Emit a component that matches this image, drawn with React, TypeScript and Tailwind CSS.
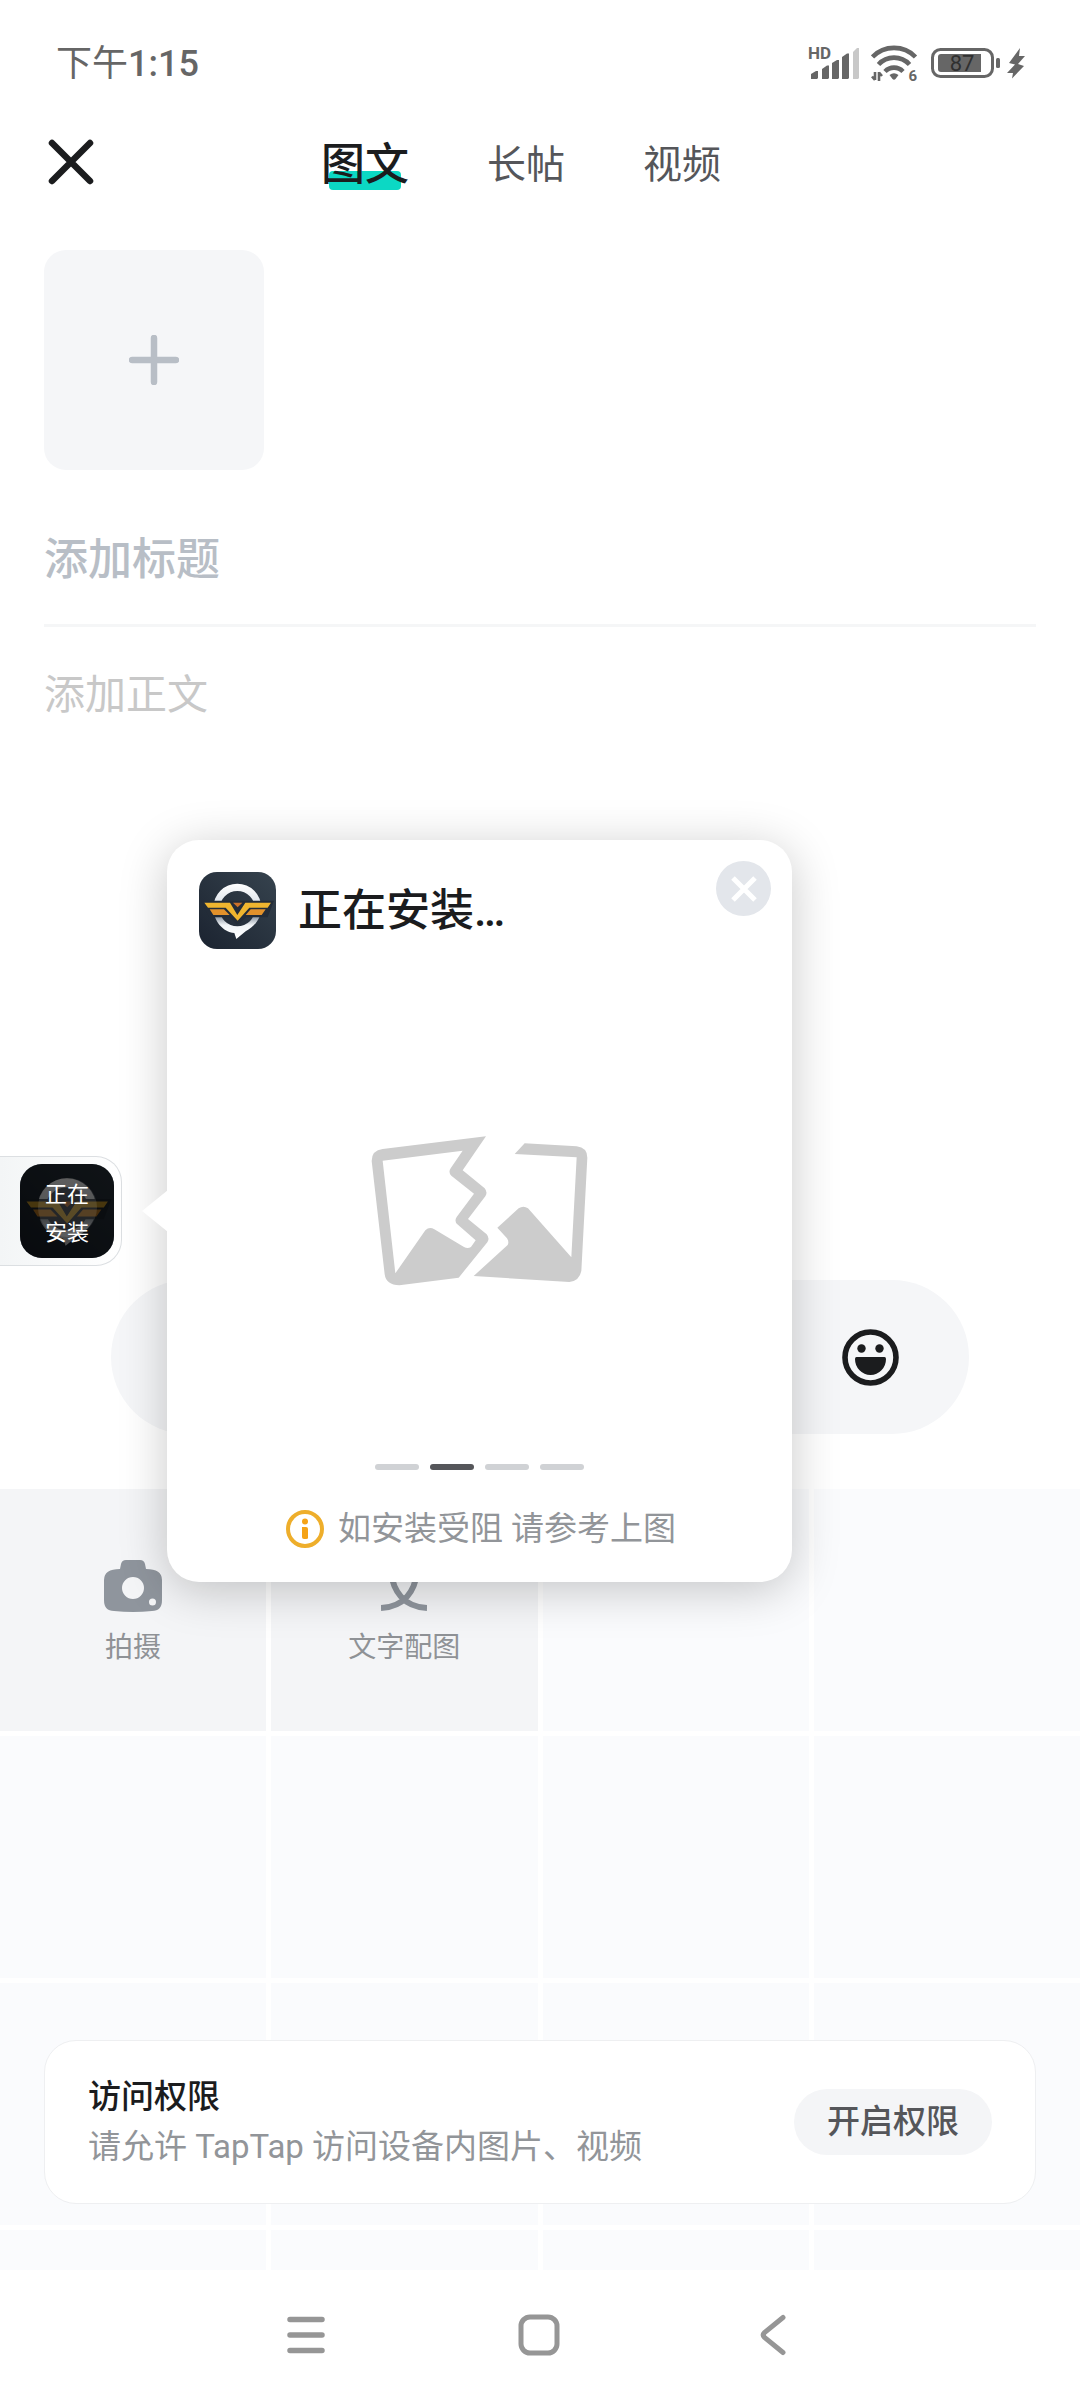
import React, { useState } from 'react';

interface IconProps {
  className?: string;
}

const SignalIcon: React.FC<IconProps> = ({ className }) => (
  <svg viewBox="-2 -6 52 48" className={className} fill="#666666" aria-hidden="true">
    <text x="-1" y="13" fontSize="17" fontWeight="700" fontFamily="Roboto, sans-serif">HD</text>
    <path d="M2 33V28L7 25H9V32L8 33Z" />
    <path d="M13 33V23L18 19.500H20V32L19 33Z" />
    <path d="M23 33V17L28 14H30V32L29 33Z" />
    <path d="M33 33V11L38 7.500H40V32L39 33Z" />
    <path d="M44 33V6L48 2H50V32L49 33Z" fill="#c8c8c8" />
  </svg>
);

const WifiIcon: React.FC<IconProps> = ({ className }) => (
  <svg viewBox="0 -6 48 48" className={className} fill="none" stroke="#666666" aria-hidden="true">
    <path d="M1.500 11A30 30 0 0 1 44.500 11" strokeWidth="4.600" />
    <path d="M7.500 18.500A21 21 0 0 1 38.500 18.500" strokeWidth="4.600" />
    <path d="M14 25.500A12.500 12.500 0 0 1 32 25.500" strokeWidth="4.600" />
    <path d="M18.500 29Q23 25.500 27.500 29L24.500 33Q23 34.500 21.500 33Z" fill="#666666" stroke="none" />
    <path d="M4 26V34M4 34L1 30.500M8 35V26M8 26.500L11 30" strokeWidth="2.600" />
    <text x="37.500" y="35" fontSize="15" fontWeight="700" fontFamily="Roboto, sans-serif" fill="#666666" stroke="none">6</text>
  </svg>
);

const BatteryIcon: React.FC<IconProps> = ({ className }) => (
  <svg viewBox="0 -6 70 48" className={className} aria-hidden="true">
    <rect x="1.500" y="3.500" width="60" height="27" rx="8" fill="none" stroke="#666666" strokeWidth="3" />
    <path d="M10 8H50V26H10Q7 26 7 23V11Q7 8 10 8Z" fill="#666666" />
    <rect x="65" y="12" width="4" height="10" rx="1.500" fill="#666666" />
    <text x="31" y="25" textAnchor="middle" fontSize="22" fontFamily="Roboto, sans-serif" fill="#303030">87</text>
  </svg>
);

const BoltIcon: React.FC<IconProps> = ({ className }) => (
  <svg viewBox="0 -6 18 48" className={className} fill="#666666" aria-hidden="true">
    <path d="M13 2L2 17L8 18.500L0 27H6L5 32.500L17 20L11 18L18 10H12Z" />
  </svg>
);

const CloseIcon: React.FC<IconProps> = ({ className }) => (
  <svg viewBox="0 0 46 46" className={className} fill="none" stroke="#1b1c1e" strokeWidth="6.500" strokeLinecap="round" aria-hidden="true">
    <path d="M4 4L42 42M42 4L4 42" />
  </svg>
);

const PlusIcon: React.FC<IconProps> = ({ className }) => (
  <svg viewBox="0 0 50 50" className={className} fill="none" stroke="#b8bec6" strokeWidth="6.500" strokeLinecap="round" aria-hidden="true">
    <path d="M25 3V47M3 25H47" />
  </svg>
);

const AppLogo: React.FC<IconProps> = ({ className }) => (
  <svg viewBox="0 0 231 231" className={className} aria-hidden="true">
    <defs>
      <linearGradient id="logo-bg" x1="1" y1="0" x2="0" y2="1">
        <stop offset="0" stopColor="#36434e" />
        <stop offset="1" stopColor="#1b2330" />
      </linearGradient>
      <linearGradient id="logo-ring" x1="0" y1="0" x2="0" y2="1">
        <stop offset="0" stopColor="#ffffff" />
        <stop offset="0.3" stopColor="#e3e8ee" />
        <stop offset="0.6" stopColor="#8f99a5" />
        <stop offset="0.75" stopColor="#f1f4f7" />
        <stop offset="1" stopColor="#ffffff" />
      </linearGradient>
    </defs>
    <rect width="231" height="231" fill="url(#logo-bg)" />
    <path
      d="M115 35A72 72 0 0 1 187 107C187 140 165 165 140 178L112 201L106 183C72 180 43 146 43 107A72 72 0 0 1 115 35ZM115 57A53 53 0 1 0 115 163A53 53 0 1 0 115 57Z"
      fill="url(#logo-ring)"
      fillRule="evenodd"
    />
    <path d="M6 86H225L206 136H142L115 158L90 136H30Z" fill="#232c38" />
    <path d="M16 92H93L115 129L139 92H216L206 107H151L116 146L80 107H27Z" fill="#efb52f" />
    <path d="M32 112H75L92 129H43ZM155 112H200L188 129H140Z" fill="#e2912b" />
    <path d="M102 92H130L116 106Z" fill="#c9702a" />
  </svg>
);

const BrokenPictureIcon: React.FC<IconProps> = ({ className }) => (
  <svg viewBox="95 75 651 450" className={className} fill="#cccccc" aria-hidden="true">
    <path
      fillRule="evenodd"
      d="M97 150Q97 118 130 114L440 76L370 178L436 232Q446 244 438 256L386 324L442 370Q452 382 444 394L358 500L180 523Q140 522 136 490ZM130 149L168 487L258 358Q270 346 285 355L374 408Q385 414 395 408L409 388L354 340Q344 330 352 318L404 248L336 194Q326 184 334 172L370 119Z"
    />
    <path d="M556 97L712 106Q744 110 744 140L726 480Q720 510 690 513L403 495L505 402Q510 392 503 382L474 350L538 292Q552 282 566 292L696 439L712 139L526 129Z" />
  </svg>
);

const InfoIcon: React.FC<IconProps> = ({ className }) => (
  <svg viewBox="0 0 38 38" className={className} aria-hidden="true">
    <circle cx="19" cy="19" r="17" fill="none" stroke="#eeae2b" strokeWidth="4" />
    <circle cx="19" cy="11.500" r="3" fill="#f5a316" />
    <path d="M16 17H20Q22 17 22 19V28Q22 29 20 29H18Q16 29 16 27Z" fill="#f5a316" />
  </svg>
);

const SmileIcon: React.FC<IconProps> = ({ className }) => (
  <svg viewBox="0 0 57 57" className={className} fill="#1b1c1e" aria-hidden="true">
    <circle cx="28.500" cy="28.500" r="25.500" fill="none" stroke="#1b1c1e" strokeWidth="5.600" />
    <circle cx="19.500" cy="19.500" r="4.200" />
    <circle cx="37.500" cy="19.500" r="4.200" />
    <path d="M14.500 28H42.500Q44 28 44 30A15.500 16 0 0 1 13 30Q13 28 14.500 28Z" />
  </svg>
);

const CameraIcon: React.FC<IconProps> = ({ className }) => (
  <svg viewBox="0 0 58 56" className={className} aria-hidden="true">
    <path
      fill="#8f959d"
      fillRule="evenodd"
      d="M22 2H36Q40 2 41 6L42 11Q58 11 58 22V42Q58 53 48 53Q29 55 10 53Q0 53 0 42V22Q0 11 16 11L17 6Q18 2 22 2ZM29 19A11 11 0 1 0 29 41A11 11 0 1 0 29 19ZM48.500 40.500A3.500 3.500 0 1 0 48.500 47.500A3.500 3.500 0 1 0 48.500 40.500Z"
    />
  </svg>
);

const TextImageIcon: React.FC<IconProps> = ({ className }) => (
  <svg viewBox="0 0 46 56" className={className} fill="none" stroke="#8f959d" strokeWidth="6" aria-hidden="true">
    <path d="M0 13H46M23 5V13" />
    <path d="M36 14C34 32 24 49 0 50" />
    <path d="M10 14C12 32 22 49 46 50" />
  </svg>
);

const TABS = ['图文', '长帖', '视频'];

const TOOLS = [
  { label: '拍摄', icon: <CameraIcon className="h-14 w-[58px]" /> },
  { label: '文字配图', icon: <TextImageIcon className="h-14 w-[46px]" /> },
];

const EMPTY_CELLS = Array.from({ length: 14 }, (_, i) => i);

const StatusBar: React.FC = () => (
  <div className="flex h-[124px] items-center justify-between pt-1 pr-[55px] pl-14 text-[#666666]">
    <span className="text-4xl">
      下午<span className="font-medium">1:15</span>
    </span>
    <div className="flex items-center gap-3">
      <SignalIcon className="h-12 w-[52px]" />
      <WifiIcon className="h-12 w-12" />
      <div className="flex gap-[6px]">
        <BatteryIcon className="h-12 w-[70px]" />
        <BoltIcon className="h-12 w-[18px]" />
      </div>
    </div>
  </div>
);

const InstallPopup: React.FC<{ onClose: () => void }> = ({ onClose }) => (
  <div
    role="dialog"
    aria-label="正在安装"
    className="absolute top-[840px] left-[167px] z-20 flex w-[625px] flex-col rounded-[32px] bg-white px-8 pt-8 pb-7 shadow-[0_8px_48px_rgba(0,0,0,0.22)]"
  >
    {/* arrow towards the docked app icon */}
    <svg viewBox="0 0 26 42" className="absolute top-[350px] -left-[25px] h-[42px] w-[26px]" fill="#ffffff" aria-hidden="true">
      <path d="M26 0L0 21L26 42Z" />
    </svg>
    <div className="flex items-center gap-[22px]">
      <AppLogo className="h-[77px] w-[77px] rounded-[18px]" />
      <h2 className="text-[44px] leading-[60px] font-medium text-[#1b1c1e]">正在安装…</h2>
    </div>
    <button
      aria-label="关闭"
      onClick={onClose}
      className="absolute top-[21px] right-[21px] flex h-[55px] w-[55px] items-center justify-center rounded-full bg-[#e3e6eb]"
    >
      <svg viewBox="0 0 26 26" className="h-[26px] w-[26px]" stroke="#ffffff" strokeWidth="5" aria-hidden="true">
        <path d="M2 2L24 24M24 2L2 24" />
      </svg>
    </button>
    <div className="flex flex-col items-center pt-[187px]">
      <BrokenPictureIcon className="h-[150px] w-[217px]" />
      <div className="flex gap-[11px] pt-[178px]">
        {[0, 1, 2, 3].map((step) => (
          <span
            key={step}
            className={`h-[6px] w-11 rounded-full ${step === 1 ? 'bg-[#55565a]' : 'bg-[#d0d2d5]'}`}
          />
        ))}
      </div>
      <div className="flex items-center gap-[14px] pt-[34px] pl-[3px] text-[33px] leading-[50px] text-[#929599]">
        <InfoIcon className="h-[38px] w-[38px]" />
        <p>如安装受阻 请参考上图</p>
      </div>
    </div>
  </div>
);

const InstallDock: React.FC = () => (
  <button className="absolute top-[1156px] left-0 z-10 flex h-[110px] w-[122px] items-center rounded-r-[26px] border-y border-r border-[#dcdfe2] bg-linear-to-r from-[#f3f5f6] to-white pl-5">
    <span className="relative flex h-[94px] w-[94px] items-center justify-center overflow-hidden rounded-[22px] pt-[6px]">
      <AppLogo className="absolute inset-0 h-full w-full" />
      <span className="absolute inset-0 bg-black/70" />
      <span className="absolute top-[14px] left-[18px] h-[59px] w-[59px] rounded-full bg-white/10" />
      <span className="relative w-11 text-[22px] leading-[38px] text-white">正在安装</span>
    </span>
  </button>
);

const App: React.FC = () => {
  const [activeTab, setActiveTab] = useState(TABS[0]);
  const [title, setTitle] = useState('');
  const [body, setBody] = useState('');
  const [popupOpen, setPopupOpen] = useState(true);

  return (
    <div className="relative flex min-h-screen flex-col overflow-hidden bg-white font-[Roboto,'Noto_Sans_CJK_SC',sans-serif]">
      <StatusBar />

      <header className="relative flex h-[76px] items-center pl-[321px]">
        <button aria-label="关闭编辑" className="absolute left-12">
          <CloseIcon className="h-[46px] w-[46px]" />
        </button>
        <nav className="flex items-center gap-[78px] pt-[5px]">
          {TABS.map((tab) => (
            <button
              key={tab}
              onClick={() => setActiveTab(tab)}
              className={`relative leading-[60px] ${
                tab === activeTab ? 'text-[44px] font-medium text-[#1b1c1e]' : 'text-[39px] text-[#55565a]'
              }`}
            >
              {tab === activeTab && (
                <span className="absolute inset-x-2 bottom-[5px] h-[19px] rounded bg-[#0cd8c4]" />
              )}
              <span className="relative">{tab}</span>
            </button>
          ))}
        </nav>
      </header>

      <main className="flex flex-1 flex-col px-11 pt-[50px]">
        <button
          aria-label="添加图片"
          className="flex h-[220px] w-[220px] items-center justify-center rounded-[22px] bg-[#f5f6f8]"
        >
          <PlusIcon className="h-[50px] w-[50px]" />
        </button>
        <input
          type="text"
          aria-label="标题"
          placeholder="添加标题"
          value={title}
          onChange={(e) => setTitle(e.target.value)}
          className="mt-5 h-[137px] w-full border-b-3 border-[#f5f6f7] pt-[5px] text-[44px] font-medium text-[#1b1c1e] outline-none placeholder:text-[#b8bec6]"
        />
        <textarea
          aria-label="正文"
          placeholder="添加正文"
          value={body}
          onChange={(e) => setBody(e.target.value)}
          className="w-full flex-1 resize-none pt-[38px] text-[41px] leading-[60px] text-[#1b1c1e] outline-none placeholder:text-[#c8c8c8]"
        />
      </main>

      <div className="mx-[111px] mb-[55px] flex h-[154px] items-center justify-end rounded-full bg-[#f5f6f8] pr-[70px]">
        <button aria-label="表情">
          <SmileIcon className="h-[57px] w-[57px]" />
        </button>
      </div>

      <section className="relative">
        <div className="grid grid-cols-4 grid-rows-[242px_242px_242px_40px] gap-[5px]">
          {TOOLS.map((tool) => (
            <button
              key={tool.label}
              className="flex flex-col items-center justify-center gap-4 bg-[#f4f5f7] pt-1 text-[28px] leading-9 text-[#8f9296]"
            >
              {tool.icon}
              {tool.label}
            </button>
          ))}
          {EMPTY_CELLS.map((cell) => (
            <div key={cell} className="bg-[#fafbfd]" />
          ))}
        </div>

        <div className="absolute inset-x-11 bottom-[66px] flex h-[164px] items-center justify-between rounded-[32px] border border-[#eeeff1] bg-white px-[43px]">
          <div className="text-[33px] leading-[50px]">
            <h3 className="font-medium text-[#1b1c1e]">访问权限</h3>
            <p className="text-[#929599]">请允许 TapTap 访问设备内图片、视频</p>
          </div>
          <button className="h-[66px] w-[198px] rounded-full bg-[#f4f5f7] text-[33px] font-medium text-[#55565a]">
            开启权限
          </button>
        </div>
      </section>

      <footer className="flex h-[130px] items-center justify-center gap-[169px] pr-[2px]">
        <button aria-label="最近任务" className="flex w-16 justify-center">
          <svg viewBox="0 0 42 42" className="h-[42px] w-[42px]" stroke="#969696" strokeWidth="5.500" strokeLinecap="round">
            <path d="M5 5.500H37M5 21H37M5 36.500H37" />
          </svg>
        </button>
        <button aria-label="主屏幕" className="flex w-16 justify-center">
          <svg viewBox="0 0 42 42" className="h-[42px] w-[42px]" fill="none" stroke="#969696" strokeWidth="5">
            <rect x="3" y="3" width="36" height="36" rx="9" />
          </svg>
        </button>
        <button aria-label="返回" className="flex w-16 justify-center">
          <svg viewBox="0 0 42 42" className="h-[42px] w-[42px]" fill="none" stroke="#969696" strokeWidth="5" strokeLinecap="round">
            <path d="M32 3.500L13.500 18.500Q11 21 13.500 23.500L32 38.500" />
          </svg>
        </button>
      </footer>

      <InstallDock />
      {popupOpen && <InstallPopup onClose={() => setPopupOpen(false)} />}
    </div>
  );
};

export default App;
